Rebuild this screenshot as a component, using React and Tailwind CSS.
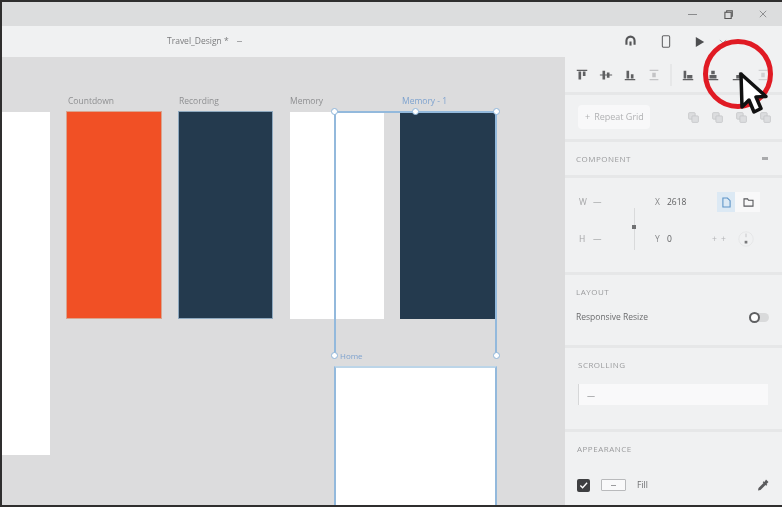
import React from 'react';

const labels = [
    { text: 'Countdown', cls: 'left-[66px]' },
    { text: 'Recording', cls: 'left-[177px]' },
    { text: 'Memory', cls: 'left-[288px]' },
];

const handles = [
    'top-[51px] left-[329px]',
    'top-[51px] left-[410px]',
    'top-[51px] left-[491px]',
    'top-[295px] left-[329px]',
    'top-[295px] left-[491px]',
];

const Glyph = ({ children }) => (
    <svg viewBox="0 0 16 16" className="w-[14px] h-[14px]" fill="currentColor">{children}</svg>
);

const AlignTop = () => <Glyph><path d="M2 2h12v1.5H2zM4 4h3v9H4zM9 4h3v5H9z" /></Glyph>;
const AlignMiddle = () => <Glyph><path d="M1 7.3h14v1.4H1zM4 3h3v10H4zM9 5h3v6H9z" /></Glyph>;
const AlignBottom = () => <Glyph><path d="M2 12.5h12V14H2zM4 3h3v9H4zM9 7h3v5H9z" /></Glyph>;
const AlignLeft = () => <Glyph><path d="M2 12.5h12V14H2zM3 3h3v9H3zM7 8h6v4H7z" /></Glyph>;
const AlignCenter = () => <Glyph><path d="M2 12.5h12V14H2zM6 3h4v4H6zM4 8h8v4H4z" /></Glyph>;
const AlignRight = () => <Glyph><path d="M2 12.5h12V14H2zM6 8h8v4H6zM9 5h4v3H9z" /></Glyph>;
const Dist = () => <Glyph><path d="M3 2h10v1.5H3zM3 12.5h10V14H3zM6 5.500h4v5H6z" /></Glyph>;

const BoolIcon = () => (
    <svg viewBox="0 0 16 16" className="w-[13px] h-[13px]" fill="#dcdddf" stroke="#c4c5c7" strokeWidth="1">
        <rect x="2" y="2" width="8" height="8" rx="1" />
        <rect x="6" y="6" width="8" height="8" rx="1" />
    </svg>
);

const SectionLabel = ({ children }) => (
    <div className="text-[8px] leading-[10px] tracking-[0.5px] text-[#9a9b9d] uppercase">{children}</div>
);

const Section = ({ className = '', children }) => (
    <div className={`border-b-[3px] border-[#e6e7e8] ${className}`}>{children}</div>
);

const App = () => {
    return (
        <div className="relative w-[782px] h-[507px] overflow-hidden bg-[#dcdcdd] border-t-2 border-l-2 border-b-2 border-[#2f2e2e] flex flex-col font-['Open_Sans',sans-serif] blur-[0.7px]">
            {/* Title bar */}
            <div className="h-[24px] bg-[#dcddde] flex items-center justify-end text-[#77787a] shrink-0">
                <div className="w-[9px] h-px bg-[#8a8b8d] mr-[27px]" />
                <svg viewBox="0 0 10 10" className="w-[9px] h-[9px] mr-[26px]" fill="none" stroke="#555" strokeWidth="1.2">
                    <rect x="1" y="2.5" width="7" height="7" />
                    <path d="M3 2.500V.8h6.200V7H8" />
                </svg>
                <svg viewBox="0 0 10 10" className="w-[8px] h-[8px] mr-[15px]" fill="none" stroke="#8a8b8d" strokeWidth="1.2">
                    <path d="M1 1l8 8M9 1L1 9" />
                </svg>
            </div>

            {/* Toolbar */}
            <div className="relative h-[31px] bg-[#f0f1f2] flex items-center shrink-0 pl-[165px]">
                <span className="text-[8.5px] text-[#7b7c7e]">Travel_Design *</span>
                <span className="ml-[8px] w-[5px] h-px bg-[#a5a6a8]" />
                <div className="ml-auto flex items-center mr-[55px]">
                    <svg viewBox="0 0 16 16" className="w-[13px] h-[13px] mr-[24px]" fill="none" stroke="#555658" strokeWidth="2.6">
                        <path d="M3 12V7a5 5 0 0 1 10 0v5" />
                        <path d="M8 8v5" />
                    </svg>
                    <svg viewBox="0 0 12 16" className="w-[10px] h-[13px] mr-[24px]" fill="none" stroke="#616264" strokeWidth="1.3">
                        <rect x="1.500" y="1" width="9" height="14" rx="1.500" />
                    </svg>
                    <svg viewBox="0 0 12 12" className="w-[10px] h-[10px] mr-[14px]" fill="#4d4e50">
                        <path d="M1 0l10 6-10 6z" />
                    </svg>
                    <svg viewBox="0 0 10 6" className="w-[8px] h-[5px]" fill="none" stroke="#a5a6a8" strokeWidth="1.2">
                        <path d="M1 1l4 4 4-4" />
                    </svg>
                </div>
            </div>

            <div className="flex-1 flex min-h-0">
                {/* Canvas */}
                <div className="relative flex-1 bg-[#dcdcdd] overflow-hidden">
                    <div className="absolute left-0 top-[55px] w-[48px] h-[343px] bg-white" />
                    {labels.map((l) => (
                        <span key={l.text} className={`absolute top-[38px] text-[8.5px] leading-[11px] text-[#8e8f91] ${l.cls}`}>{l.text}</span>
                    ))}
                    <div className="absolute top-[54px] left-[64px] w-[96px] h-[208px] bg-[#f15025] border border-[#d9a48f]" />
                    <div className="absolute top-[54px] left-[176px] w-[95px] h-[208px] bg-[#243a4e] border border-[#8fa9bf]" />
                    <div className="absolute top-[55px] left-[288px] w-[94px] h-[207px] bg-white" />

                    <span className="absolute top-[38px] left-[400px] text-[8.5px] leading-[11px] text-[#7fa3cf]">Memory - 1</span>
                    <div className="absolute top-[55px] left-[398px] w-[96px] h-[207px] bg-[#243a4e]" />

                    {/* Selection */}
                    <div className="absolute top-[54px] left-[332px] w-[163px] h-[245px] border-2 border-[#93b9dc] border-b-0" />
                    {handles.map((h) => (
                        <div key={h} className={`absolute w-[7px] h-[7px] rounded-full bg-white border border-[#8fb6da] ${h}`} />
                    ))}
                    <span className="absolute top-[293px] left-[338px] text-[8px] leading-[11px] text-[#7fa3cf]">Home</span>

                    <div className="absolute top-[309px] left-[332px] w-[163px] h-[140px] bg-white border-2 border-[#93b9dc] border-t-[#bcd5e8] border-b-0" />
                </div>

                {/* Properties panel */}
                <div className="w-[217px] shrink-0 bg-[#f0f1f2] flex flex-col">
                    <Section className="h-[38px] flex items-center pl-[10px] text-[#5f6062]">
                        <div className="flex items-center gap-[10px]">
                            <AlignTop />
                            <AlignMiddle />
                            <AlignBottom />
                            <span className="text-[#c3c4c6]"><Dist /></span>
                        </div>
                        <div className="w-[2px] h-[22px] bg-[#e6e7e8] ml-[9px] mr-[9px]" />
                        <div className="flex items-center gap-[11px]">
                            <AlignLeft />
                            <AlignCenter />
                            <AlignRight />
                            <span className="text-[#d0d1d3]"><Dist /></span>
                        </div>
                    </Section>

                    <Section className="h-[47px] flex items-center pl-[13px] pr-[10px]">
                        <div className="w-[72px] h-[24px] bg-[#f8f8f9] rounded-sm flex items-center pl-[7px] text-[9px] text-[#b0b1b3]">
                            <span className="mr-[4px]">+</span>Repeat Grid
                        </div>
                        <div className="ml-auto flex items-center gap-[11px]">
                            <BoolIcon />
                            <BoolIcon />
                            <BoolIcon />
                            <BoolIcon />
                        </div>
                    </Section>

                    <Section className="h-[36px] flex items-center justify-between pl-[11px] pr-[14px]">
                        <SectionLabel>Component</SectionLabel>
                        <span className="w-[6px] h-[3px] bg-[#a9aaac]" />
                    </Section>

                    <Section className="relative h-[97px] pt-[14px] pl-[14px] text-[8.5px] text-[#77787a]">
                        <div className="flex items-center h-[20px]">
                            <span className="w-[14px] text-[#a3a4a6]">W</span>
                            <span className="w-[62px] text-[#a3a4a6]">—</span>
                            <span className="w-[8px] text-[#88898b]">X</span>
                            <span className="ml-[4px] w-[50px] text-[#5f6062]">2618</span>
                            <div className="flex items-center bg-[#f8f8f9] w-[43px] h-[20px]">
                                <div className="w-[18px] h-[20px] bg-[#dce9f4] flex items-center justify-center">
                                    <svg viewBox="0 0 10 12" className="w-[9px] h-[11px]" fill="none" stroke="#5d94c7" strokeWidth="1.2">
                                        <path d="M1 1h5l3 3v7H1z" />
                                    </svg>
                                </div>
                                <svg viewBox="0 0 12 10" className="ml-[8px] w-[11px] h-[9px]" fill="none" stroke="#55565a" strokeWidth="1.2">
                                    <path d="M1 1h4l1 1.500h5V9H1z" />
                                </svg>
                            </div>
                        </div>
                        <div className="flex items-center h-[20px] mt-[17px]">
                            <span className="w-[14px] text-[#a3a4a6]">H</span>
                            <span className="w-[62px] text-[#a3a4a6]">—</span>
                            <span className="w-[8px] text-[#88898b]">Y</span>
                            <span className="ml-[4px] w-[45px] text-[#5f6062]">0</span>
                            <span className="text-[#b3b4b6] tracking-[1px] mr-[10px]">+ +</span>
                            <svg viewBox="0 0 20 24" className="w-[18px] h-[22px]" fill="none">
                                <circle cx="10" cy="12" r="8" stroke="#e4e5e6" />
                                <path d="M10 6v4" stroke="#c2c3c5" />
                                <rect x="8.500" y="14" width="3" height="3" fill="#77787a" />
                            </svg>
                        </div>
                        <div className="absolute left-[69px] top-[30px] h-[42px] w-px bg-[#d9dadb]" />
                        <div className="absolute left-[67px] top-[47px] w-[4px] h-[4px] bg-[#707173]" />
                    </Section>

                    <Section className="h-[73px] pt-[12px] pl-[11px] pr-[13px]">
                        <SectionLabel>Layout</SectionLabel>
                        <div className="flex items-center justify-between mt-[14px]">
                            <span className="text-[8.5px] leading-[12px] text-[#6b6c6e]">Responsive Resize</span>
                            <div className="relative w-[20px] h-[9px] rounded-full bg-[#d9dadb]">
                                <div className="absolute left-0 top-[-1px] w-[11px] h-[11px] rounded-full bg-white border-2 border-[#5f6062]" />
                            </div>
                        </div>
                    </Section>

                    <Section className="h-[84px] pt-[12px] pl-[13px]">
                        <SectionLabel>Scrolling</SectionLabel>
                        <div className="mt-[14px] h-[21px] w-[190px] bg-[#f9f9fa] border-l border-[#d6d7d8] flex items-center pl-[8px] text-[8px] text-[#77787a]">—</div>
                    </Section>

                    <div className="flex-1 pt-[12px] pl-[12px] pr-[9px]">
                        <SectionLabel>Appearance</SectionLabel>
                        <div className="flex items-center mt-[24px]">
                            <div className="w-[13px] h-[13px] rounded-[2px] bg-[#3e3f41] flex items-center justify-center">
                                <svg viewBox="0 0 10 10" className="w-[9px] h-[9px]" fill="none" stroke="#fff" strokeWidth="1.500">
                                    <path d="M1.500 5l2.500 2.500 5-5.500" />
                                </svg>
                            </div>
                            <div className="ml-[11px] w-[25px] h-[12px] bg-[#f9f9fa] border border-[#b9babc] rounded-[1px] flex items-center justify-center">
                                <span className="w-[5px] h-px bg-[#9a9b9d]" />
                            </div>
                            <span className="ml-[11px] text-[8.5px] text-[#6b6c6e]">Fill</span>
                            <svg viewBox="0 0 14 14" className="ml-auto mr-[3px] w-[14px] h-[14px]" fill="#5a5b5d">
                                <path d="M10 1.500l2.500 2.500-2 2 .8.8-1 1-.8-.8L4.500 12 2 12.500 2.500 10l5-5-.8-.8 1-1 .8.800z" />
                            </svg>
                        </div>
                    </div>
                </div>
            </div>

            {/* Callout */}
            <div className="absolute left-[701px] top-[37px] w-[70px] h-[70px] rounded-full border-[5px] border-[#e01b24]" />
            <svg viewBox="0 0 32 46" className="absolute left-[736px] top-[68px] w-[32px] h-[46px]">
                <path d="M3 4l1 33 7-7 5 12 7-3.500-5-11.500 10-.5z" fill="#fff" stroke="#111" strokeWidth="3.500" strokeLinejoin="round" />
            </svg>
        </div>
    );
};

export default App;
